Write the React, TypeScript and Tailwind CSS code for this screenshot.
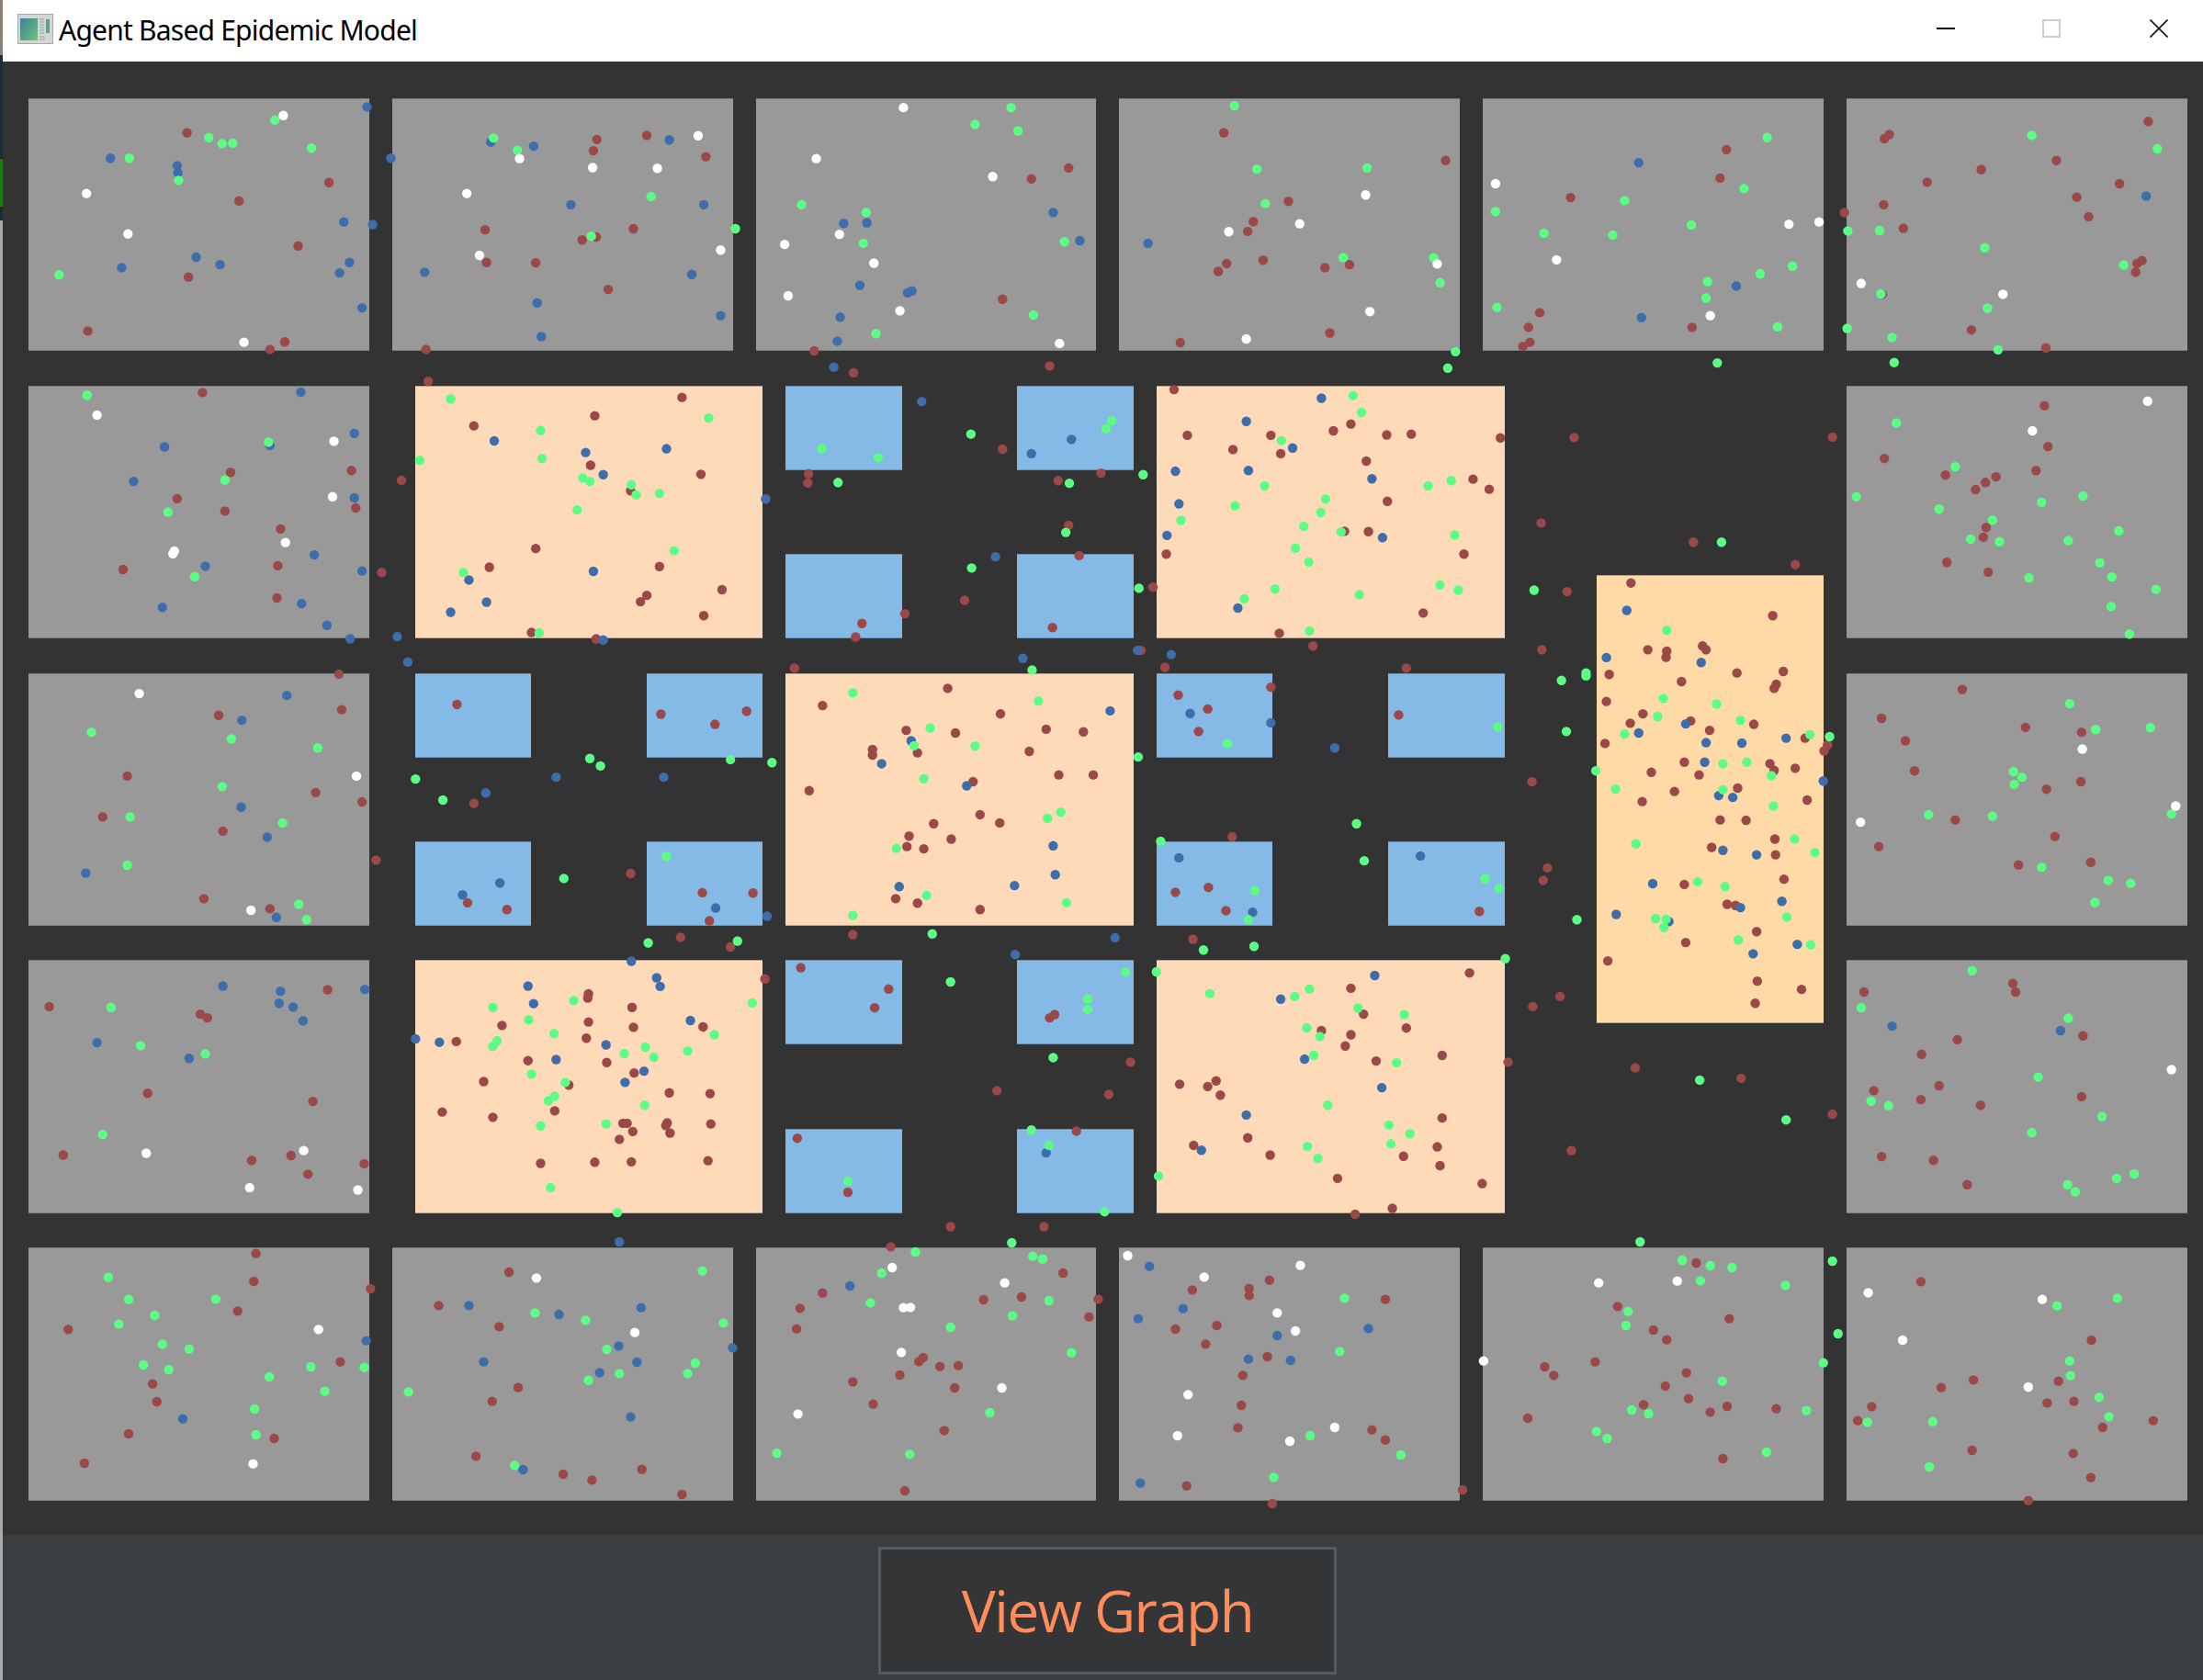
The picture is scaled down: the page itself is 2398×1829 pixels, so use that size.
const COLORS = { R: "#9a4848", B: "#3d6dab", G: "#5bfd84", W: "#ffffff" } as const;
type Kind = keyof typeof COLORS;

// agents as sampled, per sector of the map: origin plus x / y scale
const SECTORS: { x0: number; y0: number; kx: number; ky: number; dots: Partial<Record<Kind, string>> }[] = [
  {
    x0: 0, y0: 60, kx: 1.3067, ky: 2.45,
    dots: {
      R: "266,207 468,340 340,389 424,509 268,592 125,736 405,765 384,785 849,225 920,214 844,255 1004,271 690,466 901,463 828,493 848,485 692,553 762,554 865,625 606,785 1520,301 1467,330 1426,651 1158,789 1214,847 1493,829 609,870 288,900 328,1113 500,1108 252,1183 320,1216 506,1208 399,1264 395,1362 175,1372 394,1448 543,1380 571,1134 970,913 846,962 674,989 840,1094 997,1118 897,1162 762,1316 696,1366 938,1364 1027,1426 920,1441 911,1458 1001,1495 756,1540 848,1557 1426,1051 1150,1117 1149,1141 1505,1135 1566,1115 1520,1254 1535,1335 1372,1454 1287,1490 1226,1516 1217,1552 1497,1527",
      B: "522,138 157,275 252,295 253,314 489,445 530,452 279,539 313,559 173,567 497,553 483,581 515,674 556,275 698,232 759,243 952,226 812,399 1001,399 604,579 984,585 764,661 1025,695 770,751 1498,420 1200,449 1233,447 1536,495 1223,614 1297,629 1291,634 1195,699 1191,763 1186,832 428,899 504,1009 234,1045 384,1041 190,1137 504,1181 447,1333 292,1363 515,1376 231,1473 429,1463 465,1521 498,1557 565,1551 703,1029 833,1060 948,1050 858,1119 1089,1184 844,1377 667,1400 692,1459 641,1486 858,1560 1311,924 1524,1025 1467,1063 1416,1338",
      G: "391,173 297,220 316,236 331,235 443,248 184,275 254,334 84,586 702,221 736,254 926,377 841,483 1046,463 1438,140 1387,185 1448,202 1140,399 1232,420 1228,502 1514,498 1470,693 1246,743 124,907 382,1032 320,1133 239,1219 277,1391 641,917 1008,968 769,1001 597,1081 771,1076 829,1128 839,1137 898,1146 905,1173 938,1169 821,1213 959,1322 659,1380 767,1541 1381,1011 1169,1050 1249,1074 1192,1140 1521,1142 1516,1273 1382,1368",
      W: "403,161 123,369 182,477 347,766 993,215 739,276 843,300 935,302 664,369 1025,520 682,534 1285,140 1161,276 1412,324 1194,478 1116,505 1243,555 1121,642 1280,682 1507,769 138,960 475,1030 473,1178 406,1300 248,1323 246,1330",
    },
  },
  {
    x0: 1200, y0: 60, kx: 1.3088, ky: 2.45,
    dots: {
      R: "173,207 489,281 265,390 215,444 207,470 229,547 177,556 165,577 317,567 352,559 324,741 111,767 889,252 880,328 667,380 623,687 607,726 840,726 609,766 599,777 1490,177 1121,212 1114,223 1359,281 1252,305 1175,339 1449,343 1388,379 1113,399 1057,420 1405,431 1141,462 1481,548 1474,556 1472,579 1238,733 1344,781 1111,638 102,892 121,1014 240,1014 329,1002 354,984 405,1013 440,1011 567,1021 186,1052 254,1063 376,1083 528,1131 551,1158 406,1190 345,1270 379,1271 91,1331 515,1331 72,1419 457,1488 252,1542 672,1020 1040,1019 625,1248 842,1299 987,1359 662,1431 753,1408 955,1495 1342,935 1347,1044 1114,1076 1330,1108 1201,1120 1273,1125 1258,1140 1244,1159 1259,1260 1255,1286 1203,1353 1262,1379",
      B: "65,502 764,287 903,616 768,700 1487,376 312,915 205,977 271,1048 104,1110 208,1108 384,1130 109,1197 92,1281 399,1287 193,1475 747,1481",
      G: "188,135 220,304 377,301 232,396 343,540 472,541 481,607 503,791 492,835 947,220 914,356 744,388 560,417 839,453 629,475 727,480 983,563 937,583 862,604 860,648 562,673 962,725 876,821 1324,214 1503,250 1062,469 1107,468 1257,514 1455,560 1109,637 1261,675 1061,729 1125,753 1276,786 1128,820 357,908 369,953 13,975 5,997 255,1028 58,1119 231,1149 464,1149 497,1135 318,1184 189,1202 311,1220 112,1241 287,1257 340,1272 502,1280 275,1315 294,1352 52,1422 246,1424 481,1413 507,1427 202,1450 366,1439 295,1536 882,1299 615,1427 804,1534 1131,981 1215,1098 1074,1178 1192,1211 1338,1193 1397,1176 1268,1240 1448,1269 1237,1291 1278,1298 1376,1295 1421,1354 1438,1392 1320,1394 1501,1425 1437,1471 1463,1544",
      W: "375,373 281,450 180,471 477,557 381,684 205,757 560,343 978,451 1021,445 647,546 866,695 1081,609 1283,638 1489,923 1325,1002",
    },
  },
  {
    x0: 0, y0: 700, kx: 1.3067, ky: 2.45,
    dots: {
      R: "482,83 486,178 311,193 181,355 449,399 515,424 146,464 317,502 290,682 384,709 535,579 650,164 940,190 1017,217 1062,182 674,428 897,615 665,693 721,711 999,666 1071,667 1009,741 968,785 1039,811 1130,67 1348,121 1170,167 1423,189 1289,233 1359,240 1488,230 1541,237 1241,284 1241,299 1305,293 1464,289 1506,352 1555,352 1151,394 1384,370 1394,458 1328,482 1422,480 1293,515 1353,523 1290,543 1314,549 1274,682 1305,694 1394,711 1213,778 466,925 70,970 285,990 295,1000 210,1201 445,1223 90,1366 358,1380 414,1367 518,1389 438,1417 1088,896 837,936 836,947 899,972 837,1011 714,1020 901,1025 1000,1024 649,1063 834,1054 751,1114 863,1119 902,1147 688,1170 809,1179 952,1200 1010,1202 629,1251 789,1248 701,1265 886,1281 892,1281 949,1280 947,1287 1011,1283 900,1303 953,1307 881,1324 769,1388 846,1385 898,1384 1007,1381 1139,866 1264,923 1244,973 1500,991 1493,1000 1418,1194 1134,1321 1531,1302 1206,1465 1352,1557 1485,1557",
      B: "408,140 344,206 343,438 380,518 122,614 393,732 580,51 791,358 944,358 691,400 711,640 658,672 1018,707 1091,729 1296,261 1254,322 1375,381 1498,541 1501,618 1279,650 1443,647 1455,41 1444,831 317,915 399,929 519,924 397,961 417,971 431,1008 138,1066 269,1108 898,849 934,893 939,916 751,915 759,962 982,1007 591,1056 625,1065 862,1072 791,1111 916,1142 889,1172 1488,1360",
      G: "130,238 329,256 452,280 316,383 185,464 402,480 181,593 425,697 436,738 839,308 854,328 1039,311 1098,319 591,363 630,419 802,628 948,569 922,800 1049,795 1213,133 1477,155 1323,227 1300,274 1387,275 1314,362 1509,451 1490,468 1275,548 1318,673 1517,693 1213,726 1326,776 1468,72 158,972 200,1074 292,1096 146,1311 816,954 701,972 1070,960 752,1005 788,1042 1016,1045 707,1061 701,1076 918,1078 978,1088 888,1095 930,1105 756,1150 804,1172 789,1209 780,1221 917,1233 769,1288 862,1283 783,1453 878,1519 1352,904 1547,950 1547,978 1498,1106 1467,1299 1492,1340 1206,1435",
      W: "198,135 507,355 357,713 208,1361 432,1354 355,1453 509,1459",
    },
  },
  {
    x0: 1200, y0: 700, kx: 1.3088, ky: 2.45,
    dots: {
      R: "55,20 89,65 300,8 433,67 626,18 108,139 240,118 150,176 137,236 422,192 612,370 185,517 151,652 104,665 176,714 537,716 634,600 628,633 129,790 777,18 804,22 803,38 855,8 860,18 722,84 904,80 970,76 825,103 960,110 957,121 718,156 770,189 752,214 838,208 928,217 865,233 716,268 1001,254 1033,272 1028,288 829,318 951,322 987,334 957,340 782,345 850,352 905,387 815,396 769,423 1004,419 880,472 917,473 958,523 868,545 959,565 971,630 829,644 890,697 902,700 932,770 831,799 720,848 933,902 996,924 930,961 1225,124 1110,201 1315,225 1395,238 1144,261 1157,341 1394,370 1345,390 1215,472 1357,516 1106,543 1305,592 1408,585 523,880 354,921 372,990 312,1034 433,1027 354,1045 346,1075 484,1100 390,1115 40,1118 578,1118 162,1168 110,1177 150,1183 168,1206 9,1204 484,1267 207,1320 130,1340 477,1344 239,1366 429,1369 481,1394 335,1428 541,1442 413,1508 360,1524 652,943 613,970 759,1133 910,1161 1040,1257 668,1354 1297,908 1301,931 1085,931 1397,1048 1218,1058 1167,1097 1192,1181 1099,1194 1166,1218 1251,1233 1395,1210 1110,1370 1184,1380 1232,1445",
      B: "50,20 98,31 11,181 125,188 240,213 331,280 453,568 109,573 214,718 18,786 718,39 853,52 831,216 764,240 860,266 911,267 974,254 858,318 1027,368 878,407 898,412 884,553 932,565 784,642 968,689 909,706 732,724 807,743 990,804 927,829 388,887 254,950 288,1110 398,1186 205,1259 141,1353 1125,1022 1365,1034",
      G: "689,80 654,100 689,88 178,269 563,224 661,236 51,304 703,341 362,482 83,529 373,581 217,661 545,629 565,655 208,738 676,738 144,819 216,809 574,842 799,148 875,163 791,196 909,206 744,243 1008,244 1036,250 884,322 918,318 953,354 731,390 884,391 956,435 760,536 986,523 1015,559 848,637 887,650 975,731 788,735 803,737 800,759 906,792 1009,805 1378,162 1415,231 1493,226 1298,343 1310,358 1299,377 1177,458 1268,462 1523,456 1338,598 1433,633 1465,641 1414,692 33,878 77,877 153,935 295,923 274,943 364,974 430,991 291,1027 310,1050 301,1100 419,1120 321,1233 408,1286 438,1309 411,1336 292,1343 307,1375 80,1422 3,1517 851,1166 974,1272 1239,874 1081,973 1376,1001 1333,1158 1095,1222 1120,1234 1424,1263 1324,1306 1470,1416 1445,1428 1375,1445 1386,1464",
      W: "1396,283 1529,435 1080,478 1523,1138",
    },
  },
  {
    x0: 0, y0: 1290, kx: 1.3067, ky: 3,
    dots: {
      R: "1267,202 364,224 361,315 527,339 338,412 97,472 484,578 217,650 223,708 183,813 390,828 120,909 724,285 624,394 710,463 737,662 700,707 677,886 801,945 842,964 913,929 970,1011 1512,288 1170,353 1138,403 1399,375 1453,366 1562,373 1549,431 1133,470 1313,564 1307,577 1337,593 1363,590 1280,621 1213,643 1358,663 1242,716 1343,802 1287,999",
      B: "881,186 521,509 260,764 667,394 795,423 912,401 880,526 1042,532 688,578 906,579 853,613 897,758 744,930 1209,330",
      G: "1439,189 1302,219 1469,233 1483,242 154,302 183,374 307,373 220,426 169,455 231,520 269,536 204,588 240,603 442,594 518,596 383,627 462,674 362,732 364,816 999,281 761,418 833,442 1029,451 863,537 989,582 881,616 978,616 837,638 581,676 732,916 1254,288 1238,385 1492,378 1440,427 1352,465 1524,548 1408,744 1105,876 1294,880",
      W: "453,472 360,911 763,304 903,482 1269,270 1429,320 1285,401 1295,400 1282,547 1425,663 1135,748",
    },
  },
  {
    x0: 1200, y0: 1290, kx: 1.3088, ky: 3,
    dots: {
      R: "238,311 128,343 209,338 209,361 403,374 163,459 104,471 147,520 235,561 200,622 198,720 193,793 384,800 403,833 120,983 513,996 242,1041 846,255 734,397 893,437 785,474 804,506 702,578 630,594 643,622 832,614 802,657 835,698 771,718 890,723 866,742 960,731 606,762 884,894 1166,316 1409,507 1241,637 1362,641 1195,662 1346,712 1384,707 1096,724 1076,770 1497,770 1425,792 1239,867 1383,877 1408,956 1319,1031",
      B: "67,266 115,404 51,437 379,469 249,492 208,569 268,573 54,974",
      G: "766,186 345,370 338,544 296,819 425,882 244,955 826,246 866,264 897,270 1040,249 852,313 973,328 749,413 746,459 1048,486 1027,581 883,641 754,735 778,747 1003,737 704,805 719,828 946,873 1446,370 1360,395 1378,575 1379,623 1420,694 1434,757 1090,775 1183,773 1178,921",
      W: "36,231 282,263 145,301 249,418 275,477 122,685 331,792 107,819 267,837 543,575 707,320 819,314 1091,352 1339,374 1140,507 1319,660",
    },
  },
];

const agents = SECTORS.flatMap((s, i) =>
  (Object.keys(s.dots) as Kind[]).flatMap((kind) =>
    (s.dots[kind] ?? "").split(" ").map((pair, j) => {
      const [x, y] = pair.split(",").map(Number);
      return { id: `${i}-${kind}-${j}`, kind, cx: s.x0 + x / s.kx, cy: s.y0 + y / s.ky };
    })
  )
);

const Community = () => <div className="bg-[#999999] border-y border-[#7d7d7d]" />;

const Room = () => <div className="bg-[#ffdab9] border-y border-[#b9a590]" />;

const BlueBox = () => <div className="w-[126.5px] h-[92px] bg-[#85b9e6] border-y border-[#6f93b3]" />;

const BlueBlock = () => (
  <div className="flex flex-col justify-between">
    <div className="flex justify-between">
      <BlueBox />
      <BlueBox />
    </div>
    <div className="flex justify-between">
      <BlueBox />
      <BlueBox />
    </div>
  </div>
);

const WindowIcon = () => (
  <svg width="39" height="33" viewBox="0 0 39 33">
    <defs>
      <linearGradient id="pane" x1="0" y1="0" x2="1" y2="1">
        <stop offset="0" stopColor="#3f7f9a" />
        <stop offset="1" stopColor="#6fc27a" />
      </linearGradient>
    </defs>
    <rect x="0.5" y="0.5" width="38" height="32" fill="#d6d6d6" stroke="#a8a8a8" />
    <rect x="3" y="5" width="19" height="24" fill="url(#pane)" />
    <rect x="31" y="6" width="4" height="15" fill="#5f9f96" />
    <path d="M24 6h5M24 9h5M24 12h5M24 15h5M24 18h5M24 21h5M24 25h6M24 28h6" stroke="#9a9a9a" strokeWidth="1" />
  </svg>
);

const TitleBar = () => (
  <div className="h-[67px] bg-white flex items-center pl-[16px] pb-[5px] shrink-0">
    <WindowIcon />
    <span className="ml-[6px] mt-[3px] text-[30px] leading-none text-black tracking-[-0.78px] font-['Noto_Sans',sans-serif]">
      Agent Based Epidemic Model
    </span>
    <div className="ml-auto flex items-center pr-[38px]">
      <div className="w-[20px] h-[2px] bg-black" />
      <div className="ml-[95px] w-[20px] h-[20px] border-2 border-[#cccccc]" />
      <svg className="ml-[97px]" width="20" height="20" viewBox="0 0 20 20">
        <path d="M0.5 0.5L19.5 19.5M19.5 0.5L0.5 19.5" stroke="#111111" strokeWidth="1.6" />
      </svg>
    </div>
  </div>
);

const App = () => {
  return (
    <div className="w-[2398px] h-[1829px] flex overflow-hidden">
      <div className="w-[3px] shrink-0 flex flex-col bg-[#a9a9a9]">
        <div className="h-[60px] bg-[#8a8078]" />
        <div className="h-[113px] bg-[#1f2a38]" />
        <div className="h-[52px] bg-[#1f7a12]" />
        <div className="h-[15px] bg-[#1f2a38]" />
      </div>
      <div className="flex-1 flex flex-col">
        <TitleBar />
        <div className="relative h-[1604px] bg-[#333333] pt-[40px] pl-[28px]">
          <div className="grid grid-cols-[repeat(6,370.8px)] grid-rows-[repeat(5,275.4px)] gap-x-[25px] gap-y-[37.4px]">
            {Array.from({ length: 7 }, (_, i) => (
              <Community key={i} />
            ))}
            <div className="col-span-4 row-span-3 flex justify-between items-center pl-[25px]">
              <div className="grid grid-cols-[378.4px_378.4px_379px] grid-rows-[repeat(3,275.4px)] gap-x-[25.2px] gap-y-[37.4px]">
                <Room />
                <BlueBlock />
                <Room />
                <BlueBlock />
                <Room />
                <BlueBlock />
                <Room />
                <BlueBlock />
                <Room />
              </div>
              <div className="w-[247px] h-[488px] bg-[#ffd9a6] border-y border-[#b9a080]" />
            </div>
            {Array.from({ length: 11 }, (_, i) => (
              <Community key={i} />
            ))}
          </div>
          <svg className="absolute left-[-3px] top-0" width="2398" height="1604" viewBox="0 67 2398 1604">
            {agents.map((a) => (
              <circle key={a.id} cx={a.cx} cy={a.cy} r="5.2" fill={COLORS[a.kind]} />
            ))}
          </svg>
        </div>
        <div className="flex-1 bg-[#3a3e41] pt-[13px] pl-[953px]">
          <button className="w-[499px] h-[139px] bg-[#333537] border-[3px] border-[#565c5f] flex items-center justify-center text-[#ff8c5a] text-[62px] font-normal font-['Open_Sans',sans-serif] tracking-[-1.5px]">
            View Graph
          </button>
        </div>
      </div>
    </div>
  );
};

export default App;
